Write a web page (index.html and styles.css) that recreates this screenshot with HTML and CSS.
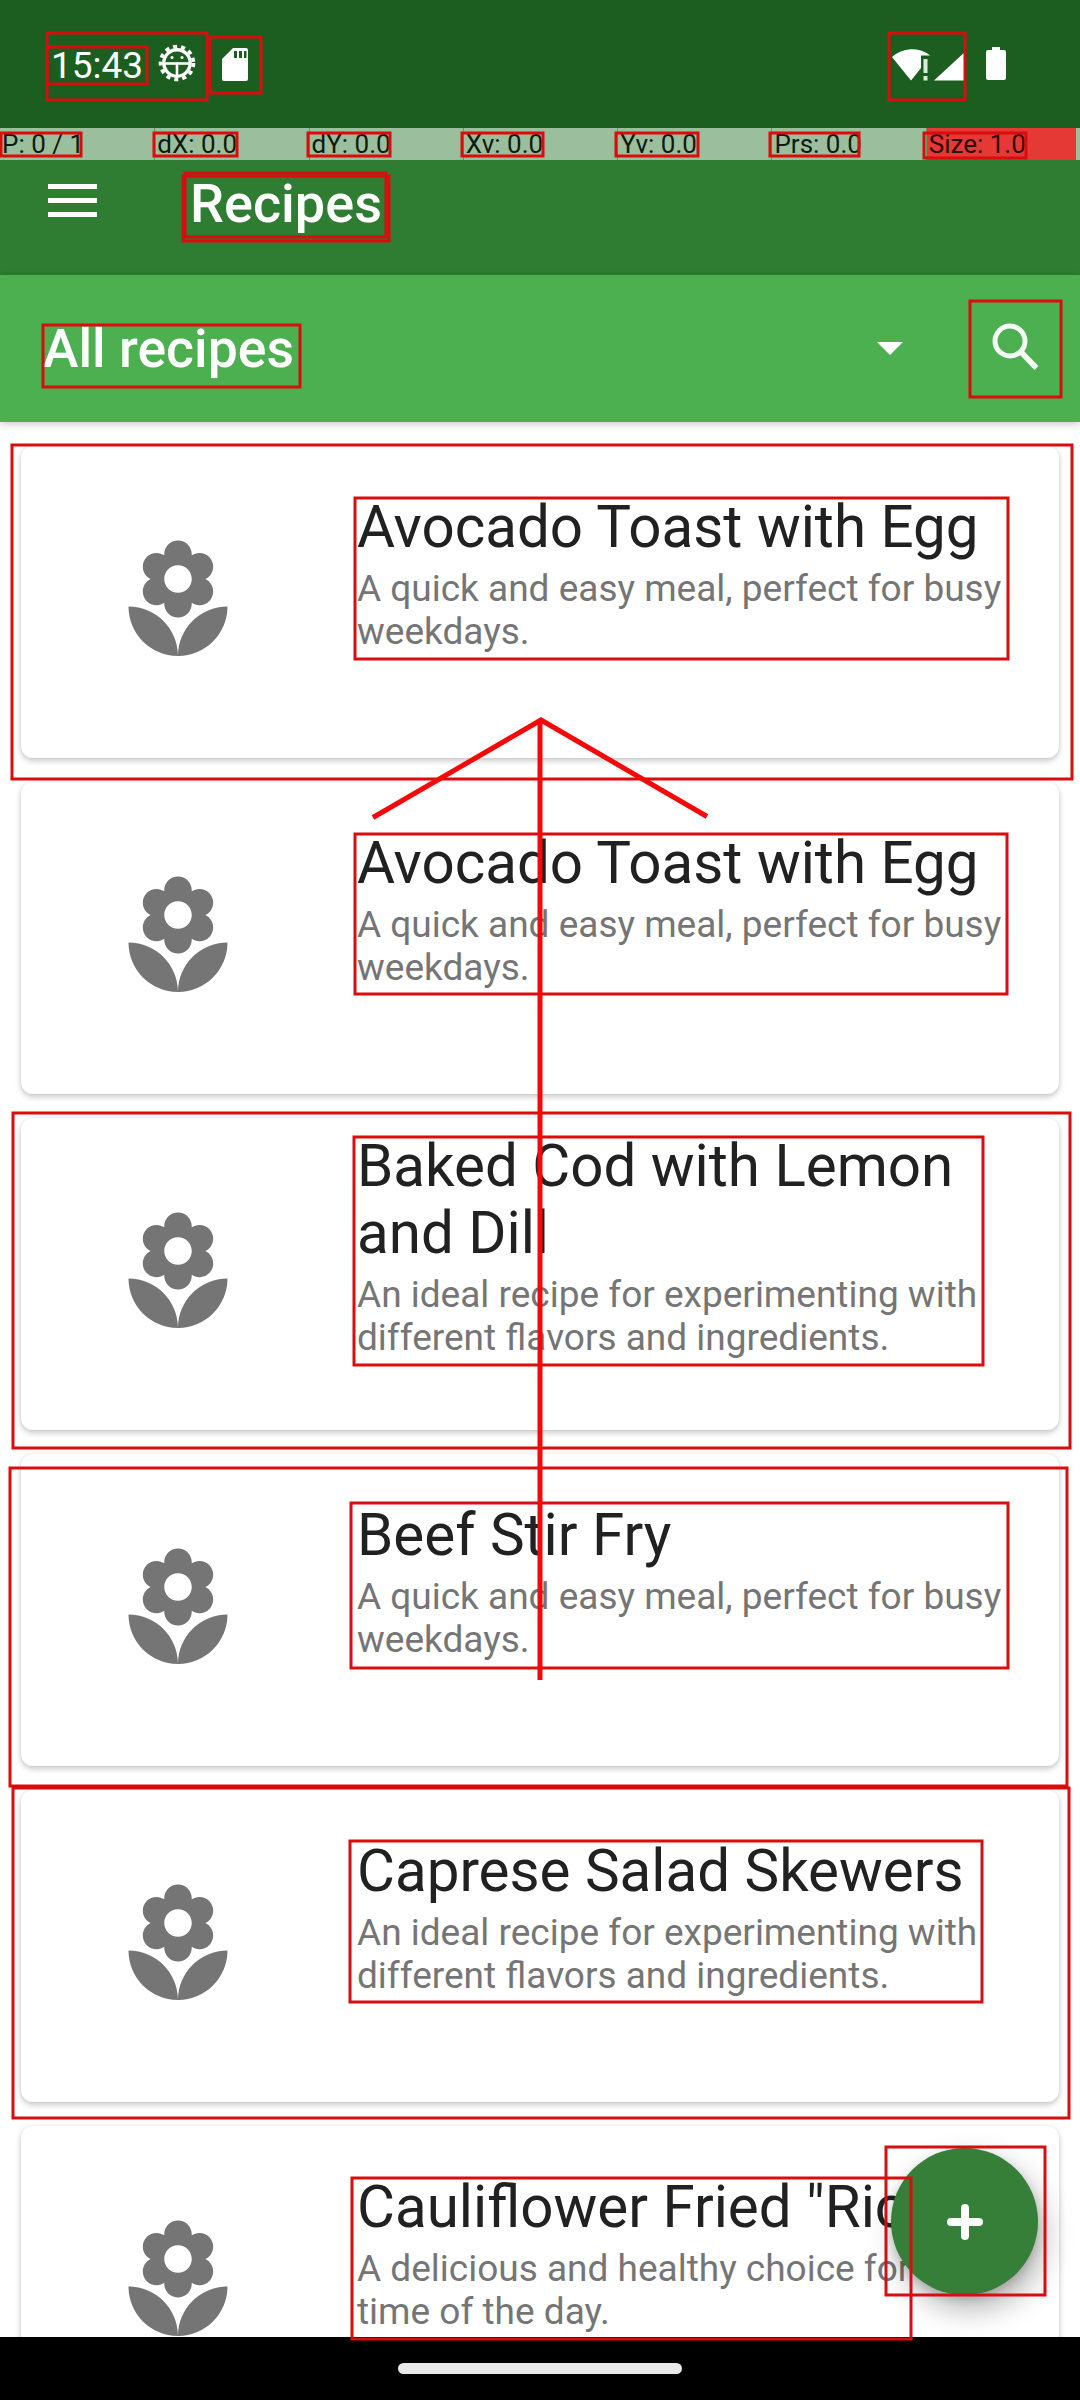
FILE: index.html
```html
<!DOCTYPE html>
<html lang="en">
<head>
<meta charset="utf-8">
<title>Recipes</title>
<link rel="stylesheet" href="styles.css">
</head>
<body>
<svg width="0" height="0" class="defs">
  <symbol id="flower" viewBox="0 0 24 24"><path d="M12 22c4.97 0 9-4.03 9-9-4.97 0-9 4.03-9 9zM5.6 10.25c0 1.38 1.12 2.5 2.5 2.5.53 0 1.01-.16 1.42-.44l-.02.19c0 1.38 1.12 2.5 2.5 2.5s2.5-1.12 2.5-2.5l-.02-.19c.4.28.89.44 1.42.44 1.38 0 2.5-1.12 2.5-2.5 0-1-.59-1.85-1.43-2.25.84-.4 1.43-1.25 1.43-2.25 0-1.38-1.12-2.5-2.5-2.5-.53 0-1.01.16-1.42.44l.02-.19C14.5 2.12 13.38 1 12 1S9.5 2.12 9.5 3.5l.02.19c-.4-.28-.89-.44-1.42-.44-1.38 0-2.5 1.12-2.5 2.5 0 1 .59 1.85 1.43 2.25-.84.4-1.43 1.25-1.43 2.25zM12 5.5c1.38 0 2.5 1.12 2.5 2.5s-1.12 2.5-2.5 2.5S9.5 9.38 9.5 8s1.12-2.5 2.5-2.5zM3 13c0 4.97 4.03 9 9 9 0-4.97-4.03-9-9-9z"/></symbol>
</svg>
<div class="screen">
  <header class="status">
    <span class="time">15:43</span>
    <svg class="ic-gear" width="38" height="38" viewBox="0 0 38 38">
      <circle cx="19" cy="19" r="16.5" fill="none" stroke="#fff" stroke-width="3.6" stroke-dasharray="4.1 4.04"/>
      <circle cx="19" cy="19" r="13.2" fill="none" stroke="#fff" stroke-width="3.4"/>
      <path d="M19 18.500v14" stroke="#fff" stroke-width="2.6" fill="none"/>
      <path d="M6 19.500h26" stroke="#fff" stroke-width="2.6"/>
      <circle cx="14" cy="13.500" r="1.5" fill="#fff"/><circle cx="24" cy="13.500" r="1.5" fill="#fff"/>
    </svg>
    <svg class="ic-sd" width="26" height="33" viewBox="0 0 26 33">
      <path fill-rule="evenodd" d="M11 0h13a2 2 0 0 1 2 2v29a2 2 0 0 1-2 2H2a2 2 0 0 1-2-2V11zM12 3v7h3V3zM17 3v7h3V3zM22 3v7h2.500V3z" fill="#fff"/>
    </svg>
    <span class="status-gap"></span>
    <svg class="ic-net" width="76" height="34" viewBox="0 0 76 34">
      <path d="M1 10A29 29 0 0 1 39 8.500H30V21L20 33.500z" fill="#fff"/>
      <path d="M32.500 12h4v14h-4zM32.500 29h4v4.500h-4z" fill="#dfe8df"/>
      <path d="M43 33.500L75 4v29.500z" fill="#fff"/>
    </svg>
    <svg class="ic-bat" width="20" height="33" viewBox="0 0 20 33">
      <path d="M6 0h8v3h4a2 2 0 0 1 2 2v26a2 2 0 0 1-2 2H2a2 2 0 0 1-2-2V5a2 2 0 0 1 2-2h4z" fill="#fff"/>
    </svg>
  </header>

  <div class="pointer">
    <div class="cell">P: 0 / 1</div>
    <div class="cell">dX: 0.0</div>
    <div class="cell">dY: 0.0</div>
    <div class="cell">Xv: 0.0</div>
    <div class="cell">Yv: 0.0</div>
    <div class="cell">Prs: 0.0</div>
    <div class="cell cell-hot">Size: 1.0</div>
  </div>

  <div class="toolbar">
    <div class="burger"><i></i><i></i><i></i></div>
    <h1 class="title">Recipes</h1>
  </div>

  <div class="filter">
    <span class="filter-label">All recipes</span>
    <span class="caret"></span>
    <svg class="ic-search" width="48" height="48" viewBox="0 0 48 48">
      <circle cx="19" cy="18" r="15" fill="none" stroke="#f4fbf4" stroke-width="5"/>
      <path d="M30 29L45.500 45" stroke="#f4fbf4" stroke-width="5.500" fill="none"/>
    </svg>
  </div>

  <main class="list">
    <article class="card">
      <svg class="flower"><use href="#flower"/></svg>
      <div class="body">
        <h2 class="name">Avocado Toast with Egg</h2>
        <p class="desc">A quick and easy meal, perfect for busy weekdays.</p>
      </div>
    </article>
    <article class="card">
      <svg class="flower"><use href="#flower"/></svg>
      <div class="body">
        <h2 class="name">Avocado Toast with Egg</h2>
        <p class="desc">A quick and easy meal, perfect for busy weekdays.</p>
      </div>
    </article>
    <article class="card">
      <svg class="flower"><use href="#flower"/></svg>
      <div class="body">
        <h2 class="name">Baked Cod with Lemon and Dill</h2>
        <p class="desc">An ideal recipe for experimenting with different flavors and ingredients.</p>
      </div>
    </article>
    <article class="card">
      <svg class="flower"><use href="#flower"/></svg>
      <div class="body">
        <h2 class="name">Beef Stir Fry</h2>
        <p class="desc">A quick and easy meal, perfect for busy weekdays.</p>
      </div>
    </article>
    <article class="card">
      <svg class="flower"><use href="#flower"/></svg>
      <div class="body">
        <h2 class="name">Caprese Salad Skewers</h2>
        <p class="desc">An ideal recipe for experimenting with different flavors and ingredients.</p>
      </div>
    </article>
    <article class="card">
      <svg class="flower"><use href="#flower"/></svg>
      <div class="body">
        <h2 class="name">Cauliflower Fried "Rice"</h2>
        <p class="desc">A delicious and healthy choice for any time of the day.</p>
      </div>
    </article>
  </main>

  <button class="fab" aria-label="Add">
    <svg width="36" height="36" viewBox="0 0 36 36"><path d="M18 4v28M4 18h28" stroke="#fff" stroke-width="8" stroke-linecap="round" fill="none"/></svg>
  </button>

  <footer class="nav"><span class="pill"></span></footer>

  <svg class="overlay" width="1080" height="2400" viewBox="0 0 1080 2400">
    <g class="boxes">
      <rect x="47" y="33" width="160" height="67"/>
      <rect x="47" y="47" width="100" height="37"/>
      <rect x="210" y="37" width="51" height="56"/>
      <rect x="889" y="33" width="76" height="67"/>
      <rect x="1" y="133" width="80" height="23"/>
      <rect x="154" y="133" width="83" height="23"/>
      <rect x="308" y="133" width="82" height="23"/>
      <rect x="462" y="133" width="81" height="23"/>
      <rect x="616" y="133" width="82" height="23"/>
      <rect x="770" y="133" width="89" height="23"/>
      <rect x="924" y="133" width="102" height="25"/>
      <rect x="185" y="173" width="201" height="64"/>
      <rect x="183" y="176" width="206" height="65"/>
      <rect x="43" y="325" width="257" height="62"/>
      <rect x="970" y="301" width="91" height="96"/>
      <rect x="12" y="445" width="1060" height="334"/>
      <rect x="355" y="498" width="653" height="161"/>
      <rect x="355" y="834" width="652" height="160"/>
      <rect x="13" y="1113" width="1057" height="335"/>
      <rect x="354" y="1137" width="629" height="228"/>
      <rect x="10" y="1468" width="1057" height="318"/>
      <rect x="351" y="1503" width="657" height="165"/>
      <rect x="13" y="1788" width="1056" height="330"/>
      <rect x="350" y="1841" width="632" height="161"/>
      <rect x="352" y="2178" width="559" height="161"/>
      <rect x="886" y="2147" width="159" height="148"/>
    </g>
    <path class="gesture" d="M373 817.500L541 720L707 816.500M540 720V1680"/>
  </svg>
</div>
</body>
</html>
```
FILE: styles.css
```css
* { box-sizing: border-box; }
html, body { margin: 0; padding: 0; }
body { width: 1080px; height: 2400px; overflow: hidden; background: #fff; font-family: Roboto, "Noto Sans", sans-serif; }
.defs { position: absolute; }
.screen { position: relative; width: 1080px; height: 2400px; display: flex; flex-direction: column; overflow: hidden; }

.status { height: 128px; flex: none; background: #1b5e20; display: flex; align-items: flex-start; padding-left: 51px; color: #fff; }
.time { font-size: 37px; line-height: 42px; margin-top: 45px; width: 107px; }
.ic-gear { margin-top: 44px; margin-left: 0; }
.ic-sd { margin-top: 48px; margin-left: 26px; }
.status-gap { flex: 1; }
.ic-net { margin-top: 47px; margin-right: 19px; }
.ic-bat { margin-top: 47px; margin-right: 74px; }

.pointer { height: 32px; flex: none; background: #9bbf9c; display: grid; grid-template-columns: repeat(7, 1fr); }
.cell { font-size: 26px; line-height: 32px; color: #0f1a10; padding-left: 2px; border-left: 1px solid #5e9a62; white-space: nowrap; }
.cell:first-child { border-left: 0; }
.cell-hot { background: #e53935; margin-right: 4px; color: #2b0a09; }

.toolbar { height: 115px; flex: none; background: #2e7d32; display: flex; align-items: flex-start; position: relative; }
.burger { width: 49px; margin: 24px 0 0 48px; display: flex; flex-direction: column; gap: 9px; }
.burger i { display: block; height: 5px; background: #fff; }
.title { margin: 0 0 0 93px; font-size: 54px; line-height: 62px; font-weight: 500; color: #fff; padding-top: 13px; letter-spacing: 0; }

.filter { height: 147px; flex: none; background: #4caf50; display: flex; align-items: flex-start; box-shadow: 0 2px 8px rgba(0,0,0,.22); position: relative; z-index: 1; }
.filter-label { margin: 43px 0 0 43px; font-size: 53.5px; line-height: 62px; font-weight: 500; color: #fff; width: 834px; white-space: nowrap; flex: none; }
.caret { width: 0; height: 0; margin: 67px 0 0 0; border-left: 13px solid transparent; border-right: 13px solid transparent; border-top: 13px solid #fff; flex: none; }
.ic-search { margin: 48px 0 0 88px; flex: none; }

.list { flex: 1; min-height: 0; overflow: hidden; padding: 24px 21px 0; display: flex; flex-direction: column; gap: 24px; background: #fff; }
.card { height: 312px; flex: none; background: #fff; border-radius: 12px; box-shadow: 0 3px 6px rgba(0,0,0,.2), 0 0 4px rgba(0,0,0,.07); display: flex; align-items: flex-start; }
.flower { width: 132px; height: 132px; fill: #757575; margin: 89px 0 0 91px; flex: none; }
.body { height: 252px; margin-left: 113px; width: 656px; padding-top: 3px; display: flex; flex-direction: column; justify-content: center; }
.name { margin: 0; font-size: 58.3px; line-height: 67px; font-weight: 400; color: #212121; }
.desc { margin: 6px 0 0; font-size: 37px; line-height: 43px; color: #757575; }

.fab { position: absolute; left: 891px; top: 2148px; width: 147px; height: 147px; border: 0; padding: 0; border-radius: 50%; background: #357f38; box-shadow: 6px 14px 30px rgba(0,0,0,.3), 0 4px 10px rgba(0,0,0,.16); display: flex; align-items: center; justify-content: center; }

.nav { height: 63px; flex: none; background: #000; display: flex; justify-content: center; padding-top: 26px; position: relative; z-index: 1; }
.pill { width: 284px; height: 11px; border-radius: 6px; background: #e8e8e8; }

.overlay { position: absolute; left: 0; top: 0; z-index: 3; pointer-events: none; }
.boxes rect { fill: none; stroke: #d90d0d; stroke-width: 3; }
.gesture { fill: none; stroke: #f40808; stroke-width: 5; }
```
